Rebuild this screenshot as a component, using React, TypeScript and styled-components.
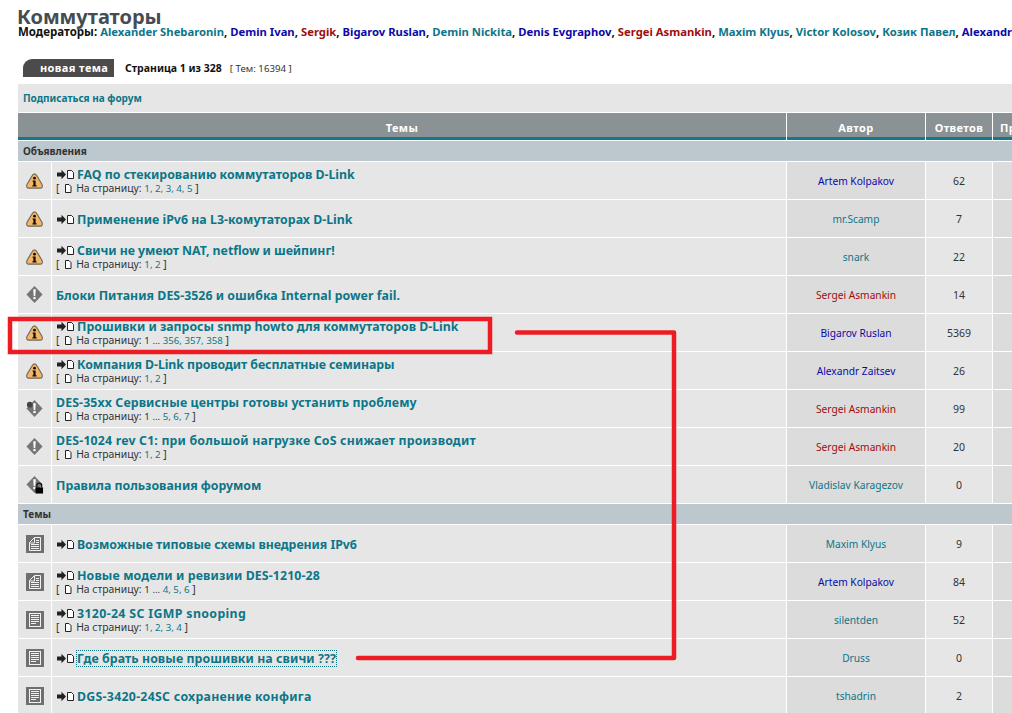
import React from 'react';
import styled, { createGlobalStyle } from 'styled-components';

const FONT = '"Noto Sans", "DejaVu Sans", sans-serif';
const TEAL = '#0c7688';
const BLUE = '#0a0aa8';
const RED = '#a00c0c';

const Global = createGlobalStyle`
  html, body { margin: 0; padding: 0; background: #fff; overflow: hidden; width: 1012px; height: 713px; }
  body { font-family: ${FONT}; color: #222; }
`;

const Page = styled.div`
  position: relative;
  width: 1012px;
  height: 713px;
  overflow: hidden;
  padding: 5px 0 0 18px;
  box-sizing: border-box;
`;
const Title = styled.h1`
  margin: 0 0 0 -1px;
  font-size: 20px;
  line-height: 24px;
  font-weight: 700;
  color: #454c52;
`;
const Moderators = styled.div`
  font-size: 11.5px;
  line-height: 14px;
  font-weight: 700;
  color: #111;
  white-space: nowrap;
  margin-top: -4px;
`;
const Name = styled.span<{ $c: string }>`
  color: ${(p) => p.$c};
`;
const ModName = styled(Name)`
  font-size: 11.25px;
`;
const Toolbar = styled.div`
  display: flex;
  align-items: center;
  margin: 20px 0 7px 5px;
  height: 18px;
`;
const NewTopic = styled.div`
  width: 91px;
  height: 18px;
  box-sizing: border-box;
  background: #4b4b4b;
  border-top-left-radius: 9px;
  color: #fff;
  font-size: 11px;
  font-weight: 700;
  line-height: 18px;
  padding-left: 17px;
  letter-spacing: 0.4px;
`;
const PageInfo = styled.span`
  margin-left: 11px;
  font-size: 10.5px;
  font-weight: 700;
  color: #111;
`;
const Count = styled.span`
  margin-left: 8px;
  font-size: 9.7px;
  color: #333;
`;
const Subscribe = styled.div`
  width: 1100px;
  height: 28px;
  background: #e6e6e6;
  box-sizing: border-box;
  padding-left: 5px;
  font-size: 10px;
  font-weight: 700;
  line-height: 29px;
  color: ${TEAL};
`;
const Grid = styled.div`
  display: grid;
  grid-template-columns: 33px 734px 138px 66px 120px;
  column-gap: 1px;
  row-gap: 1px;
  width: 1100px;
  padding-top: 1px;
`;
const Head = styled.div<{ $span?: number }>`
  grid-column: span ${(p) => p.$span ?? 1};
  height: 27px;
  box-sizing: border-box;
  background: #8a9295;
  border-bottom: 3px solid #0f7a8a;
  color: #fff;
  font-size: 11px;
  font-weight: 700;
  letter-spacing: 0.4px;
  padding-top: 3px;
  line-height: 24px;
  text-align: center;
  white-space: nowrap;
  overflow: hidden;
`;
const HeadLeft = styled(Head)`
  text-align: left;
  padding-left: 7px;
`;
const Section = styled.div`
  grid-column: 1 / -1;
  height: 20px;
  background: #bdc7ce;
  color: #333;
  font-size: 10px;
  font-weight: 700;
  line-height: 20px;
  padding-left: 5px;
`;
const Cell = styled.div<{ $h: number }>`
  height: ${(p) => p.$h}px;
  background: #e6e6e6;
  display: flex;
  align-items: center;
  justify-content: center;
`;
const TopicCell = styled(Cell)`
  flex-direction: column;
  align-items: flex-start;
  padding: 1px 0 0 4px;
  box-sizing: border-box;
`;
const AuthorCell = styled(Cell)`
  background: #dcdcdc;
  font-size: 10.2px;
`;
const ReplyCell = styled(Cell)`
  font-size: 10.5px;
  color: #333;
`;
const LastCell = styled(Cell)`
  background: #dcdcdc;
`;
const TopicLine = styled.div`
  display: flex;
  align-items: center;
  height: 15px;
`;
const TopicLink = styled.span<{ $focus?: boolean; $track?: number }>`
  font-size: 12.33px;
  line-height: 15px;
  font-weight: 700;
  letter-spacing: ${(p) => p.$track ?? 0}px;
  color: ${TEAL};
  white-space: nowrap;
  outline: ${(p) => (p.$focus ? `1px dotted ${TEAL}` : 'none')};
`;
const Pages = styled.div`
  display: flex;
  align-items: center;
  height: 13px;
  font-size: 10.4px;
  line-height: 13px;
  color: #333;
  white-space: pre;
`;
const PageLink = styled.span`
  color: ${TEAL};
  font-size: 9.7px;
`;
const PlainText = styled.span`
  color: #333;
`;
const Svg = styled.svg`
  display: block;
  flex: none;
`;
const ArrowSvg = styled(Svg)`
  margin: 0 2px 0 1px;
`;
const MiniDocSvg = styled(Svg)`
  margin: 0 4px 0 2px;
`;
const Overlay = styled.svg`
  position: absolute;
  left: 0;
  top: 0;
  pointer-events: none;
`;

const Arrow = () => (
  <ArrowSvg width="18" height="11" viewBox="0 0 18 11">
    <path d="M0 3.500h4.500V.8L9 5.500l-4.500 4.700V7.500H0z" fill="#222" />
    <path d="M10.500 1.500h4l2 2v6h-6z" fill="#fff" stroke="#222" strokeWidth="1" />
  </ArrowSvg>
);
const MiniDoc = () => (
  <MiniDocSvg width="8" height="11" viewBox="0 0 8 11">
    <path d="M1.500 1.500h3.500l2 2v6h-5.500z" fill="#fff" stroke="#222" strokeWidth="1" />
  </MiniDocSvg>
);
const InfoIcon = () => (
  <Svg width="19" height="18" viewBox="0 0 20 18">
    <path d="M10 1.500c1.300 0 2 1 3 2.800l4.800 8.200c1 2 .5 4-2 4H4.200c-2.500 0-3-2-2-4L7 4.300C8 2.500 8.700 1.500 10 1.500z" fill="#f3b56a" stroke="#6e6a55" strokeWidth="1.200" />
    <circle cx="10" cy="6" r="1.500" fill="#111" />
    <path d="M8 8.500h3.200v5h1v1.200H7.800v-1.200h1v-3.800H8z" fill="#111" />
  </Svg>
);
const DiamondIcon = ({ mark }: { mark?: 'dot' | 'lock' }) => (
  <Svg width="19" height="19" viewBox="0 0 20 20">
    <path d="M10 1l8.500 9-8.500 9-8.500-9z" fill="#757575" />
    <path d="M8.700 4.500h2.600l-.5 7H9.200z" fill="#fff" />
    <rect x="8.800" y="12.500" width="2.400" height="2.400" fill="#fff" />
    {mark === 'dot' && <circle cx="5" cy="6" r="3" fill="#444" />}
    {mark === 'lock' && (
      <>
        <path d="M12.500 13v-2a2.500 2.500 0 015 0v2" fill="none" stroke="#111" strokeWidth="1.300" />
        <rect x="11" y="13" width="8" height="6.500" fill="#000" />
      </>
    )}
  </Svg>
);
const DocIcon = ({ fold }: { fold?: boolean }) => (
  <Svg width="18" height="18" viewBox="0 0 18 18">
    <rect width="18" height="18" fill="#6f6f6f" />
    {fold ? (
      <>
        <path d="M8.500 2.500h6v13h-11V7.500z" fill="#6f6f6f" stroke="#f2f2f2" strokeWidth="1" />
        <path d="M8.500 3v5H3.500" fill="none" stroke="#f2f2f2" strokeWidth="1" />
        <path d="M10 5.500h3M10 7.500h3M5 9.500h8M5 11.500h8M5 13.500h8" stroke="#f2f2f2" strokeWidth="1" />
      </>
    ) : (
      <>
        <rect x="3.500" y="2.500" width="11" height="13" fill="#6f6f6f" stroke="#f2f2f2" strokeWidth="1" />
        <path d="M5 4.500h8M5 6.500h8M5 8.500h8M5 10.500h8M5 12.500h5" stroke="#f2f2f2" strokeWidth="1" />
      </>
    )}
  </Svg>
);

type Item = {
  icon: React.ReactNode;
  title: string;
  arrow?: boolean;
  pages?: React.ReactNode;
  author: string;
  color: string;
  replies: string;
  focus?: boolean;
  track?: number;
};

const rows = (list: Item[]) =>
  list.map((r) => {
    const h = 37;
    return (
      <React.Fragment key={r.title}>
        <Cell $h={h}>{r.icon}</Cell>
        <TopicCell $h={h}>
          <TopicLine>
            {r.arrow !== false && <Arrow />}
            <TopicLink $focus={r.focus} $track={r.track}>{r.title}</TopicLink>
          </TopicLine>
          {r.pages && (
            <Pages>
              {'[ '}
              <MiniDoc />
              {'На страницу: '}
              <PageLink>{r.pages}</PageLink>
              {' ]'}
            </Pages>
          )}
        </TopicCell>
        <AuthorCell $h={h}>
          <Name $c={r.color}>{r.author}</Name>
        </AuthorCell>
        <ReplyCell $h={h}>{r.replies}</ReplyCell>
        <LastCell $h={h} />
      </React.Fragment>
    );
  });

const announcements: Item[] = [
  { icon: <InfoIcon />, title: 'FAQ по стекированию коммутаторов D-Link', pages: '1, 2, 3, 4, 5', author: 'Artem Kolpakov', color: BLUE, replies: '62' },
  { icon: <InfoIcon />, title: 'Применение iPv6 на L3-комутаторах D-Link', author: 'mr.Scamp', color: TEAL, replies: '7', track: 0.03 },
  { icon: <InfoIcon />, title: 'Свичи не умеют NAT, netflow и шейпинг!', pages: '1, 2', author: 'snark', color: TEAL, replies: '22', track: -0.05 },
  { icon: <DiamondIcon />, arrow: false, title: 'Блоки Питания DES-3526 и ошибка Internal power fail.', author: 'Sergei Asmankin', color: RED, replies: '14', track: 0.04 },
  { icon: <InfoIcon />, title: 'Прошивки и запросы snmp howto для коммутаторов D-Link', pages: <><PlainText>1 ... </PlainText>356, 357, 358</>, author: 'Bigarov Ruslan', color: BLUE, replies: '5369' },
  { icon: <InfoIcon />, title: 'Компания D-Link проводит бесплатные семинары', pages: '1, 2', author: 'Alexandr Zaitsev', color: BLUE, replies: '26', track: -0.07 },
  { icon: <DiamondIcon mark="dot" />, arrow: false, title: 'DES-35xx Сервисные центры готовы устанить проблему', pages: <><PlainText>1 ... </PlainText>5, 6, 7</>, author: 'Sergei Asmankin', color: RED, replies: '99', track: 0.12 },
  { icon: <DiamondIcon />, arrow: false, title: 'DES-1024 rev C1: при большой нагрузке CoS снижает производит', pages: '1, 2', author: 'Sergei Asmankin', color: RED, replies: '20', track: 0.18 },
  { icon: <DiamondIcon mark="lock" />, arrow: false, title: 'Правила пользования форумом', author: 'Vladislav Karagezov', color: TEAL, replies: '0' },
];

const topics: Item[] = [
  { icon: <DocIcon fold />, title: 'Возможные типовые схемы внедрения IPv6', author: 'Maxim Klyus', color: TEAL, replies: '9', track: -0.05 },
  { icon: <DocIcon fold />, title: 'Новые модели и ревизии DES-1210-28', pages: <><PlainText>1 ... </PlainText>4, 5, 6</>, author: 'Artem Kolpakov', color: BLUE, replies: '84', track: 0.12 },
  { icon: <DocIcon />, title: '3120-24 SC IGMP snooping', pages: '1, 2, 3, 4', author: 'silentden', color: TEAL, replies: '52', track: 0.36 },
  { icon: <DocIcon />, title: 'Где брать новые прошивки на свичи ???', focus: true, author: 'Druss', color: TEAL, replies: '0', track: 0.08 },
  { icon: <DocIcon />, title: 'DGS-3420-24SC сохранение конфига', author: 'tshadrin', color: TEAL, replies: '2', track: 0.28 },
];

const mods: [string, string][] = [
  ['Alexander Shebaronin', TEAL],
  ['Demin Ivan', BLUE],
  ['Sergik', RED],
  ['Bigarov Ruslan', BLUE],
  ['Demin Nickita', TEAL],
  ['Denis Evgraphov', BLUE],
  ['Sergei Asmankin', RED],
  ['Maxim Klyus', TEAL],
  ['Victor Kolosov', TEAL],
  ['Козик Павел', TEAL],
  ['Alexandr Zaitsev', BLUE],
];

export default function App() {
  return (
    <Page>
      <Global />
      <Title>Коммутаторы</Title>
      <Moderators>
        Модераторы:{' '}
        {mods.map(([n, c], i) => (
          <React.Fragment key={n}>
            <ModName $c={c}>{n}</ModName>
            {i < mods.length - 1 ? ', ' : ''}
          </React.Fragment>
        ))}
      </Moderators>
      <Toolbar>
        <NewTopic>новая тема</NewTopic>
        <PageInfo>Страница 1 из 328</PageInfo>
        <Count>[ Тем: 16394 ]</Count>
      </Toolbar>
      <Subscribe>Подписаться на форум</Subscribe>
      <Grid>
        <Head $span={2}>Темы</Head>
        <Head>Автор</Head>
        <Head>Ответов</Head>
        <HeadLeft>Просмотров</HeadLeft>
        <Section>Объявления</Section>
        {rows(announcements)}
        <Section>Темы</Section>
        {rows(topics)}
      </Grid>
      <Overlay width="1012" height="713" viewBox="0 0 1012 713">
        <rect x="10" y="319" width="480" height="33" fill="none" stroke="#ed1c24" strokeWidth="4.500" />
        <path d="M517 332.500H674V658H358" fill="none" stroke="#ed1c24" strokeWidth="4.500" strokeLinecap="round" strokeLinejoin="round" />
      </Overlay>
    </Page>
  );
}
